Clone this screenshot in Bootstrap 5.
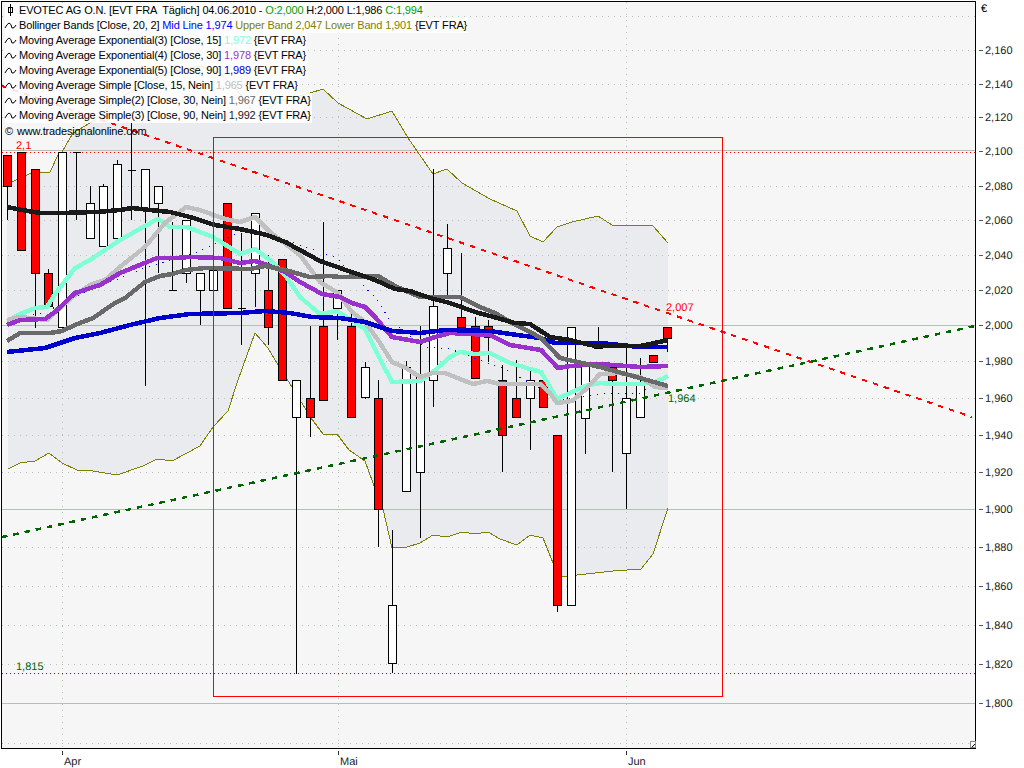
<!DOCTYPE html>
<html lang="de">
<head>
<meta charset="utf-8">
<title>EVOTEC AG O.N. Chart</title>
<link href="https://cdn.jsdelivr.net/npm/bootstrap@5.3.0/dist/css/bootstrap.min.css" rel="stylesheet">
<style>
html,body{margin:0;background:#fff;overflow:hidden}
.chart-page{width:1024px;height:768px;font-family:"Liberation Sans",Arial,sans-serif;font-size:11px;line-height:15px;color:#000;letter-spacing:-.15px}
.chart-svg{display:block;width:1024px;height:768px}
.chart-svg text{font-family:"Liberation Sans",Arial,sans-serif;font-size:11px;letter-spacing:0}
.legend-box{top:3px;left:5px}
.legend-row{height:15px;background:rgba(255,255,255,.88);padding-right:1px;white-space:pre}
.legend-copy{height:15px;white-space:pre;margin-top:1px}
.legend-ico{width:12px;height:15px;flex:none;margin-right:2px;overflow:visible}
.c-up{color:#00a000}.c-blue{color:#0000ff}.c-olive{color:#808000}.c-aqua{color:#7fffd4}.c-purple{color:#9932cc}.c-navy{color:#0000cd}.c-silver{color:#c0c0c0}.c-grey{color:#696969}.c-black{color:#1a1a1a}
</style>
</head>
<body>
<div class="chart-page position-relative">
<svg class="chart-svg" id="chart" viewBox="0 0 1024 768" xmlns="http://www.w3.org/2000/svg" shape-rendering="crispEdges">
<rect x="1.5" y="1.5" width="974" height="747" fill="#f6f6f6" stroke="#000"/>
<g id="grid"></g>
<g id="band"></g>
<g id="candles"></g>
<g id="lines"></g>
<g id="overlay"></g>
<g id="ticks"></g>
<g text-rendering="geometricPrecision">
<text x="981" y="12" fill="#000">€</text>
<g fill="#222">
<text x="985" y="54">2,160</text><text x="985" y="88">2,140</text><text x="985" y="121">2,120</text><text x="985" y="155">2,100</text><text x="985" y="190">2,080</text><text x="985" y="224">2,060</text><text x="985" y="259">2,040</text><text x="985" y="294">2,020</text><text x="985" y="329">2,000</text><text x="985" y="365">1,980</text><text x="985" y="402">1,960</text><text x="985" y="439">1,940</text><text x="985" y="476">1,920</text><text x="985" y="513">1,900</text><text x="985" y="551">1,880</text><text x="985" y="590">1,860</text><text x="985" y="629">1,840</text><text x="985" y="668">1,820</text><text x="985" y="707">1,800</text>
<text x="64" y="765">Apr</text><text x="340" y="765">Mai</text><text x="628" y="765">Jun</text>
</g>
<text x="16" y="149" fill="#f00">2,1</text>
<text x="16" y="670" fill="#006400">1,815</text>
<text x="666" y="311" fill="#f00">2,007</text>
<text x="668" y="402" fill="#006400">1,964</text>
</g>
</svg>
<div class="legend-box position-absolute d-flex flex-column align-items-start">
<div class="legend-row d-flex align-items-center"><svg class="legend-ico" viewBox="0 0 12 15"><path d="M5.5 1v12M3.5 4.5h4v5h-4z" fill="none" stroke="#000" shape-rendering="crispEdges"/></svg><span>EVOTEC AG O.N. [EVT FRA  Täglich] 04.06.2010 - <span class="c-up">O:2,000</span> H:2,000 L:1,986 <span class="c-up">C:1,994</span></span></div>
<div class="legend-row d-flex align-items-center"><svg class="legend-ico" viewBox="0 0 12 15"><path d="M0 10Q2 6 4 5Q6 5 7 10Q9 11 11 7" fill="none" stroke="#000"/></svg><span>Bollinger Bands [Close, 20, 2] <span class="c-blue">Mid Line 1,974</span> <span class="c-olive">Upper Band 2,047</span> <span class="c-olive">Lower Band 1,901</span> {EVT FRA}</span></div>
<div class="legend-row d-flex align-items-center"><svg class="legend-ico" viewBox="0 0 12 15"><path d="M0 10Q2 6 4 5Q6 5 7 10Q9 11 11 7" fill="none" stroke="#000"/></svg><span>Moving Average Exponential(3) [Close, 15] <span class="c-aqua">1,972</span> {EVT FRA}</span></div>
<div class="legend-row d-flex align-items-center"><svg class="legend-ico" viewBox="0 0 12 15"><path d="M0 10Q2 6 4 5Q6 5 7 10Q9 11 11 7" fill="none" stroke="#000"/></svg><span>Moving Average Exponential(4) [Close, 30] <span class="c-purple">1,978</span> {EVT FRA}</span></div>
<div class="legend-row d-flex align-items-center"><svg class="legend-ico" viewBox="0 0 12 15"><path d="M0 10Q2 6 4 5Q6 5 7 10Q9 11 11 7" fill="none" stroke="#000"/></svg><span>Moving Average Exponential(5) [Close, 90] <span class="c-navy">1,989</span> {EVT FRA}</span></div>
<div class="legend-row d-flex align-items-center"><svg class="legend-ico" viewBox="0 0 12 15"><path d="M0 10Q2 6 4 5Q6 5 7 10Q9 11 11 7" fill="none" stroke="#000"/></svg><span>Moving Average Simple [Close, 15, Nein] <span class="c-silver">1,965</span> {EVT FRA}</span></div>
<div class="legend-row d-flex align-items-center"><svg class="legend-ico" viewBox="0 0 12 15"><path d="M0 10Q2 6 4 5Q6 5 7 10Q9 11 11 7" fill="none" stroke="#000"/></svg><span>Moving Average Simple(2) [Close, 30, Nein] <span class="c-grey">1,967</span> {EVT FRA}</span></div>
<div class="legend-row d-flex align-items-center"><svg class="legend-ico" viewBox="0 0 12 15"><path d="M0 10Q2 6 4 5Q6 5 7 10Q9 11 11 7" fill="none" stroke="#000"/></svg><span>Moving Average Simple(3) [Close, 90, Nein] <span class="c-black">1,992</span> {EVT FRA}</span></div>
<div class="legend-copy d-flex align-items-center"><span class="me-1">©</span><span>www.tradesignalonline.com</span></div>
</div>
</div>
<script>
(function(){
var NS='http://www.w3.org/2000/svg';
function el(p,n,a){var e=document.createElementNS(NS,n);for(var k in a)e.setAttribute(k,a[k]);document.getElementById(p).appendChild(e);return e}
function pts(a){var s='';for(var i=0;i<a.length;i+=2)s+=a[i]+','+a[i+1]+' ';return s}
// band
var up=[7,184,12,182,33,172,50,172,58,155,62,152,73,133,95,120,117,100,140,86,170,72,200,66,220,73,237,90,257,117,280,101,310,93,323,89,338,103,367,119,392,111,408,138,433,174,447,169,462,183,490,199,517,211,530,236,543,242,557,227,572,222,598,216,612,225,653,226,668,243];
var lo=[8,469,20,463,35,461,49,453,62,463,77,470,93,471,117,475,143,466,157,459,172,461,200,446,213,427,228,411,238,380,255,333,268,348,278,365,292,387,311,418,323,434,337,434,349,450,365,461,373,483,383,509,392,548,407,547,420,543,433,535,447,537,462,532,475,534,488,532,500,539,517,545,530,535,543,538,553,563,562,577,577,575,613,571,641,569,653,554,668,508];
var rev=[];for(var i=lo.length-2;i>=0;i-=2)rev.push(lo[i],lo[i+1]);
el('band','polygon',{points:pts(up.concat(rev)),fill:'#e9ebee'});
// grid
[62,338,626].forEach(function(x){
 el('grid','line',{x1:x+.5,x2:x+.5,y1:2,y2:748,stroke:'#b0c4b0','stroke-dasharray':'1 5'})});
[150,325,509,703].forEach(function(y){
 el('band','line',{x1:2,x2:975,y1:y+.5,y2:y+.5,stroke:'#b2c2b2'})});
[16,50,84,117,186,220,255,290,361,398,435,472,547,586,625,664,743].forEach(function(y){
 el('band','line',{x1:2,x2:975,y1:y+.5,y2:y+.5,stroke:'#b8c0b8','stroke-dasharray':'1 5'})});
[62,338,626].forEach(function(x){
 el('band','line',{x1:x+.5,x2:x+.5,y1:2,y2:748,stroke:'#b0c4b0','stroke-dasharray':'1 5'})});
el('band','line',{x1:2,x2:975,y1:152.5,y2:152.5,stroke:'#f00','stroke-dasharray':'1 3'});
el('band','line',{x1:2,x2:975,y1:673.5,y2:673.5,stroke:'#005f00','stroke-dasharray':'1 3'});
el('band','polyline',{points:pts(up),fill:'none',stroke:'#808000'});
el('band','polyline',{points:pts(lo),fill:'none',stroke:'#808000'});
// candles: type(r,w,d), hi, lo, top, bottom
var c=[['r',155,220,155,186],['r',152,250,152,250],['r',169,328,169,273],['r',269,306,273,306],['w',152,327,152,327],['d',152,220,152,152],['w',186,238,203,238],['w',184,246,186,246],['w',160,238,164,238],['d',122,220,170,170],['w',169,386,169,210],['w',186,273,186,203],['d',222,290,290,290],['w',220,283,220,273],['w',273,325,273,290],['w',270,290,270,290],['r',203,308,203,308],['d',233,345,308,308],['w',213,307,213,273],['r',255,345,290,327],['r',259,380,259,380],['w',380,674,380,417],['r',326,437,398,417],['r',222,400,326,400],['w',290,340,290,308],['r',313,417,326,417],['w',362,399,367,397],['r',380,547,398,509],['w',530,673,605,663],['w',361,491,367,491],['w',326,538,375,472],['w',169,407,306,380],['w',224,298,248,273],['r',253,327,317,327],['r',317,378,326,378],['r',320,362,326,337],['r',365,472,380,435],['r',360,417,398,417],['w',370,450,380,398],['r',380,407,380,407],['r',435,612,435,605],['w',327,605,327,605],['w',362,454,362,418],['r',327,348,345,348],['r',367,472,367,380],['w',346,509,398,453],['w',358,417,382,417],['r',355,362,355,362],['r',327,352,327,338]];
c.forEach(function(d,i){
 var x=Math.round(7.5+13.75*i-.5)+.5;
 el('candles','line',{x1:x,x2:x,y1:d[1],y2:d[2],stroke:'#000'});
 if(d[0]=='d'){el('candles','line',{x1:x-4,x2:x+4,y1:d[3]+.5,y2:d[3]+.5,stroke:'#000'});return}
 el('candles','rect',{x:x-4,y:d[3]+.5,width:8,height:Math.max(d[4]-d[3],1),fill:d[0]=='r'?'#f00':'#fff',stroke:'#000'});
});
// moving averages
var L={
 dot:[33,315,45,312,60,305,88,291,130,274,145,268,195,253,217,243,248,228,280,238,337,258,357,280,373,295,382,307,388,318,412,338,425,347,450,349,480,360,507,370,543,390,560,400,610,393,640,393,660,380],
 teal:[7,321,20,314,35,308,47,307,55,294,75,268,90,260,120,240,145,226,158,219,170,227,187,227,213,237,240,254,255,249,270,260,285,275,300,297,320,314,337,311,365,329,380,359,392,382,420,381,433,372,450,357,460,352,475,354,490,353,510,363,530,369,541,372,557,399,572,392,585,386,600,383,613,384,640,384,655,382,668,376],
 grey:[7,341,20,333,50,333,62,331,75,325,93,318,115,303,125,298,145,282,160,276,172,274,186,270,205,268,250,269,265,266,285,270,310,277,330,276,340,277,378,276,395,286,420,297,460,297,480,307,495,313,510,322,530,332,541,338,560,358,600,367,640,378,668,386],
 silver:[7,320,20,317,47,320,60,308,75,295,90,285,105,280,120,267,145,247,165,223,186,207,200,210,225,219,240,222,255,217,270,232,300,255,320,282,338,293,352,312,365,322,378,340,392,362,406,368,420,377,433,373,445,373,460,379,473,384,487,381,500,384,540,384,550,393,557,403,572,401,585,390,600,374,620,373,640,377,655,387,668,388],
 purple:[7,325,20,320,45,319,55,312,75,293,100,285,120,273,157,258,175,258,190,257,220,258,240,263,255,261,270,266,285,272,300,282,322,294,340,297,352,303,365,307,375,317,392,337,420,342,435,337,450,333,490,335,510,345,541,350,558,368,570,366,600,364,640,367,668,366],
 blue:[7,352,45,348,75,338,100,333,130,325,160,318,190,314,240,313,265,311,290,313,312,317,340,318,365,322,392,331,420,333,445,330,490,331,510,334,540,338,555,343,600,343,640,347,668,347],
 black:[7,207,22,210,40,213,60,213,97,212,120,210,132,208,150,210,170,212,190,217,215,225,240,229,267,235,285,242,300,250,320,261,340,268,375,280,395,289,410,291,430,298,450,303,475,312,490,316,515,323,530,324,550,337,570,340,590,345,600,346,640,346,650,344,668,340]};
el('lines','polyline',{points:pts(L.dot),fill:'none',stroke:'#0000ff','stroke-dasharray':'1 6'});
[['teal','#7fffd4'],['silver','#c0c0c0'],['purple','#9932cc'],['blue','#0000cd'],['grey','#696969'],['black','#1a1a1a']].forEach(function(m){
 el('lines','polyline',{points:pts(L[m[0]]),fill:'none',stroke:m[1],'stroke-width':4.5,'stroke-linejoin':'round'})});
// overlays
el('overlay','rect',{x:213.5,y:137.5,width:509,height:559,fill:'none',stroke:'#f00'});
el('overlay','line',{x1:2,y1:86,x2:972,y2:417,stroke:'#f00','stroke-width':2,'stroke-dasharray':'5.5 6'});
el('overlay','line',{x1:2,y1:537,x2:975,y2:326,stroke:'#006400','stroke-width':2.5,'stroke-dasharray':'5.5 6'});
// ticks
[50,84,117,151,186,220,255,290,325,361,398,435,472,509,547,586,625,664,703].forEach(function(y){
 el('ticks','line',{x1:979,x2:983,y1:y+.5,y2:y+.5,stroke:'#555'})});
[62,338,626].forEach(function(x){el('ticks','line',{x1:x+.5,x2:x+.5,y1:751,y2:755,stroke:'#333'})});
el('ticks','rect',{x:970.5,y:741.5,width:5,height:6,fill:'#fff',stroke:'#888'});
el('ticks','line',{x1:972,y1:747,x2:975,y2:744,stroke:'#000'});
})();
</script>
<script src="https://cdn.jsdelivr.net/npm/bootstrap@5.3.0/dist/js/bootstrap.bundle.min.js"></script>
</body>
</html>
